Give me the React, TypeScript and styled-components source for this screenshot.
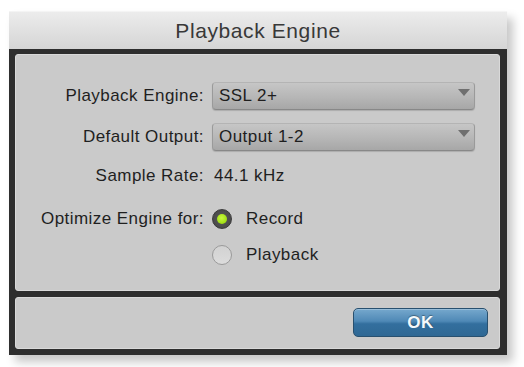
import React, { useState } from 'react'
import styled, { createGlobalStyle } from 'styled-components'

const GlobalStyle = createGlobalStyle`
  body {
    margin: 0;
    background: #ffffff;
    font-family: "Liberation Sans", Arial, Helvetica, sans-serif;
  }
`

const Page = styled.div`
  padding: 11px 0 0 9px;
  width: 524px;
  height: 367px;
  box-sizing: border-box;
`

const Window = styled.div`
  width: 498px;
  box-shadow: 6px 7px 9px rgba(0, 0, 0, 0.22);
`

const TitleBar = styled.div`
  height: 38px;
  display: flex;
  align-items: center;
  justify-content: center;
  background: linear-gradient(#ececec, #d5d5d5);
  border-top: 1px solid #f4f4f4;
  box-sizing: border-box;
  color: #383838;
  font-size: 21px;
  letter-spacing: 0.6px;
  padding-top: 1px;
`

const Frame = styled.div`
  background: #2e2e2e;
  padding: 5px 7px 6px 6px;
  display: flex;
  flex-direction: column;
  gap: 6px;
`

const Panel = styled.div<{ $h: number }>`
  height: ${(p) => p.$h}px;
  box-sizing: border-box;
  background: #cacaca;
  border: 1px solid #d9d9d9;
  border-radius: 3px;
`

const Form = styled(Panel)`
  display: grid;
  grid-template-columns: 188px 263px;
  grid-template-rows: 41px 39px 43px 36px 28px;
  column-gap: 8px;
  padding-top: 27px;
  font-size: 17px;
  letter-spacing: 0.45px;
  color: #1f1f1f;
`

const Footer = styled(Panel)`
  display: flex;
  justify-content: flex-end;
  padding: 10px 11px 0 0;
`

const Label = styled.div`
  height: 28px;
  display: flex;
  align-items: center;
  justify-content: flex-end;
  white-space: nowrap;
`

const Value = styled.div`
  height: 28px;
  display: flex;
  align-items: center;
  padding-left: 2px;
`

const Select = styled.div`
  position: relative;
  height: 28px;
  box-sizing: border-box;
  display: flex;
  align-items: center;
  padding: 0 0 0 6px;
  border: 1px solid #9a9a9a;
  border-top-color: #b4b4b4;
  border-bottom-color: #888888;
  border-radius: 4px;
  background: linear-gradient(#c6c6c6, #b6b6b6 55%, #a7a7a7);
  box-shadow: 0 1px 1px rgba(0, 0, 0, 0.15);
  color: #1e1e1e;
`

const Arrow = styled.span`
  position: absolute;
  right: 4px;
  top: 6px;
  width: 0;
  height: 0;
  border-left: 6px solid transparent;
  border-right: 6px solid transparent;
  border-top: 7px solid #6f6f6f;
`

const RadioRow = styled.label`
  height: 28px;
  display: flex;
  align-items: center;
  gap: 14px;
  cursor: pointer;
`

const RadioDot = styled.span<{ $on: boolean }>`
  width: 20px;
  height: 20px;
  box-sizing: border-box;
  border-radius: 50%;
  display: flex;
  align-items: center;
  justify-content: center;
  border: 1px solid ${(p) => (p.$on ? '#3a3a3a' : '#9a9a9a')};
  background: ${(p) =>
    p.$on ? 'radial-gradient(#5a5a5a, #444444)' : 'linear-gradient(#d2d2d2, #dcdcdc)'};

  &::after {
    content: '';
    display: ${(p) => (p.$on ? 'block' : 'none')};
    width: 10px;
    height: 10px;
    border-radius: 50%;
    background: radial-gradient(circle at 45% 40%, #c8f740, #8fd400);
  }
`

const OkButton = styled.button`
  width: 135px;
  height: 29px;
  border: 1px solid #28506f;
  border-radius: 5px;
  background: linear-gradient(#76a8cd, #4f89b6 45%, #336f9e 55%, #2f6894);
  color: #f4f8fb;
  font-family: "Liberation Sans", Arial, sans-serif;
  font-weight: bold;
  font-size: 17px;
  letter-spacing: 0.5px;
  text-shadow: 0 -1px 1px rgba(0, 0, 0, 0.35);
  box-shadow: inset 0 1px 0 rgba(255, 255, 255, 0.25);
  cursor: pointer;
`

const App = () => {
  const [mode, setMode] = useState('Record')

  return (
    <Page>
      <GlobalStyle />
      <Window>
        <TitleBar>Playback Engine</TitleBar>
        <Frame>
          <Form $h={237}>
            <Label>Playback Engine:</Label>
            <Select>
              SSL 2+
              <Arrow />
            </Select>
            <Label>Default Output:</Label>
            <Select>
              Output 1-2
              <Arrow />
            </Select>
            <Label>Sample Rate:</Label>
            <Value>44.1 kHz</Value>
            <Label>Optimize Engine for:</Label>
            <RadioRow onClick={() => setMode('Record')}>
              <RadioDot $on={mode === 'Record'} />
              Record
            </RadioRow>
            <div />
            <RadioRow onClick={() => setMode('Playback')}>
              <RadioDot $on={mode === 'Playback'} />
              Playback
            </RadioRow>
          </Form>
          <Footer $h={52}>
            <OkButton>OK</OkButton>
          </Footer>
        </Frame>
      </Window>
    </Page>
  )
}

export default App
